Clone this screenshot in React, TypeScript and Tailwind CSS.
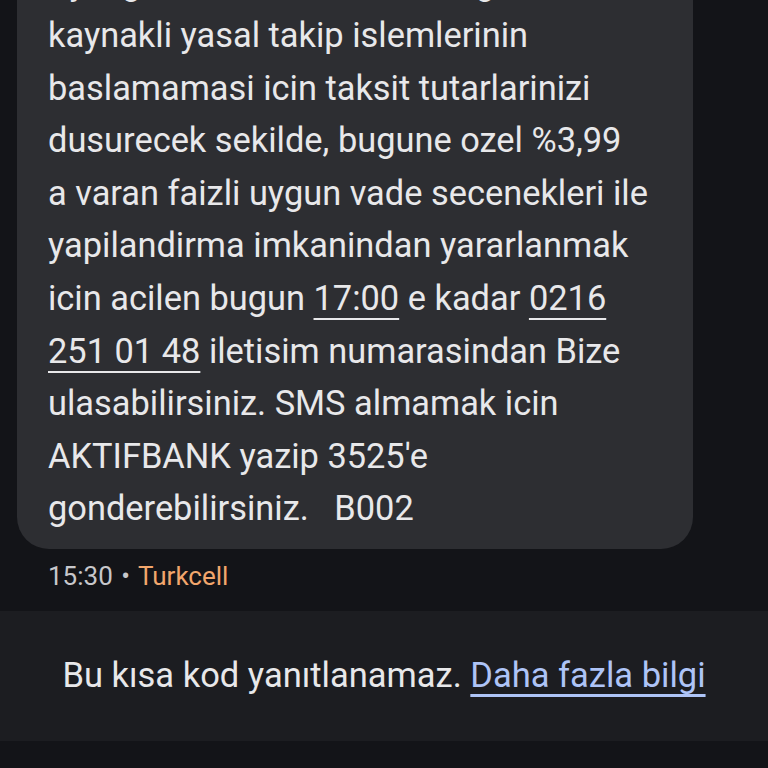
const LINK = "underline decoration-2 underline-offset-[8px]";

const LINES: React.ReactNode[] = [
  "Ayni gecikmis borcunuzdan gelecek",
  "kaynakli yasal takip islemlerinin",
  "baslamamasi icin taksit tutarlarinizi",
  "dusurecek sekilde, bugune ozel %3,99",
  "a varan faizli uygun vade secenekleri ile",
  "yapilandirma imkanindan yararlanmak",
  <>
    icin acilen bugun <span className={LINK}>17:00</span> e kadar{" "}
    <span className={LINK}>0216</span>
  </>,
  <>
    <span className={LINK}>251 01 48</span> iletisim numarasindan Bize
  </>,
  "ulasabilirsiniz. SMS almamak icin",
  "AKTIFBANK yazip 3525'e",
  <>gonderebilirsiniz.&nbsp;&nbsp;&nbsp;B002</>,
];

export default function App() {
  return (
    <div className="h-[768px] w-[768px] overflow-hidden bg-[#131418] font-['Roboto','Noto_Sans',sans-serif]">
      <div className="ml-[17px] w-[676px] rounded-b-[32px] bg-[#2d2e32] px-[31px] pb-[14px]">
        <div className="mt-[-43.5px] text-[34.4px] leading-[52.6px] text-[#e8e8ea]">
          {LINES.map((line, i) => (
            <div key={i} className="whitespace-nowrap">
              {line}
            </div>
          ))}
        </div>
      </div>
      <div className="ml-[48px] mt-[12px] text-[26px] leading-[30px] text-[#c7c7cb]">
        15:30 <span className="mx-[2px]">•</span>{" "}
        <span className="text-[#f2a66c]">Turkcell</span>
      </div>
      <div className="mt-[20px] flex h-[130px] items-center justify-center bg-[#1c1d21] text-[34.5px] text-[#e8e8ea]">
        <span>
          Bu kısa kod yanıtlanamaz.{" "}
          <span className="text-[#aec4f7] underline decoration-[3px] underline-offset-[7px]">
            Daha fazla bilgi
          </span>
        </span>
      </div>
    </div>
  );
}
